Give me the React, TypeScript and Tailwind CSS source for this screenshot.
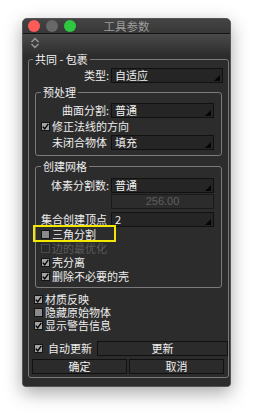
import React from "react";

function Check({ on, dim }: { on?: boolean; dim?: boolean }) {
  if (dim) {
    return <span className="block h-[9px] w-[9px] shrink-0 border border-[#4a4a4a] bg-[#2a2a2a]" />;
  }
  return (
    <span
      className={
        "flex h-[9px] w-[9px] shrink-0 items-center justify-center border border-[#141414] " +
        (on ? "bg-[#a3a3a3]" : "bg-[#8a8a8a]")
      }
    >
      {on && (
        <svg width="7" height="7" viewBox="0 0 7 7">
          <path d="M0.8 3.6 L2.7 5.8 L6.3 0.8" fill="none" stroke="#000" strokeWidth="1.4" />
        </svg>
      )}
    </span>
  );
}

function Select({ value, w }: { value: string; w: string }) {
  return (
    <div
      className={
        "flex h-[15px] items-center justify-between border border-[#111] bg-[#252525] pl-[3px] pr-[2px] " + w
      }
    >
      <span className="leading-[13px] text-[#f0f0f0]">{value}</span>
      <svg className="mb-[1px] self-end" width="6" height="6" viewBox="0 0 6 6">
        <polygon points="6,0 6,6 0,6" fill="#050505" />
      </svg>
    </div>
  );
}

function Row({ label, labelW, pr = 2, children }: { label: string; labelW: string; pr?: number; children: React.ReactNode }) {
  return (
    <div className="flex items-center">
      <span
        className={
          "shrink-0 text-right leading-[15px] text-[#ececec] " + labelW + (pr === 2 ? " pr-[2px]" : " pr-[4px]")
        }
      >
        {label}
      </span>
      {children}
    </div>
  );
}

function CheckRow({ label, on, dim, h, pl }: { label: string; on?: boolean; dim?: boolean; h: string; pl: string }) {
  return (
    <div className={"flex items-center gap-[2px] " + h + " " + pl}>
      <Check on={on} dim={dim} />
      <span className={"leading-[13px] " + (dim ? "text-[#5c5c5c]" : "text-[#ededed]")}>{label}</span>
    </div>
  );
}

export default function App() {
  return (
    <div className="min-h-[416px] bg-white pl-[22px] pt-[18px] font-['Noto_Sans_CJK_SC','Noto_Sans',sans-serif] text-[11px]">
      <div className="w-[209px] overflow-hidden rounded-t-[5px] rounded-b-[4px] border border-[#555] bg-[#2c2c2c] shadow-[0_6px_18px_rgba(0,0,0,0.35)]">
        {/* title bar */}
        <div className="relative flex h-[15px] items-center border-b border-[#121212] bg-gradient-to-b from-[#444] to-[#383838]">
          <div className="flex items-center gap-[6px] pl-[5px]">
            <span className="h-[12px] w-[12px] rounded-full bg-[#fc5b57]" />
            <span className="h-[12px] w-[12px] rounded-full bg-[#686868]" />
            <span className="h-[12px] w-[12px] rounded-full bg-[#2dc840]" />
          </div>
          <span className="absolute left-0 right-0 top-0 text-center text-[11.5px] leading-[15px] text-[#9d9d9d]">
            工具参数
          </span>
        </div>

        <div className="bg-[linear-gradient(to_bottom,#4a4a4a_0px,#2c2c2c_22px)] px-[5px] pb-[8px]">
          <div className="flex h-[18px] items-center pl-[2px]">
            <svg width="10" height="12" viewBox="0 0 10 12">
              <path d="M1.5 5 L5 1.5 L8.5 5" fill="none" stroke="#9a9a9a" strokeWidth="1.4" />
              <path d="M1.5 7 L5 10.5 L8.5 7" fill="none" stroke="#9a9a9a" strokeWidth="1.4" />
            </svg>
          </div>

          <fieldset className="mr-[3px] rounded-[3px] border border-[#7a7a7a] pb-[4px]">
            <legend className="ml-[4px] px-[2px] leading-[14px] text-[#f4f4f4]">共同 - 包裹</legend>

            <div className="mt-[2px]">
              <Row label="类型:" labelW="w-[82px]">
                <Select value="自适应" w="w-[112px]" />
              </Row>
            </div>

            <fieldset className="ml-[6px] mr-[6px] mt-[2px] rounded-[3px] border border-[#7a7a7a] pb-[5px]">
              <legend className="ml-[5px] px-[2px] leading-[14px] text-[#ececec]">预处理</legend>
              <div className="mt-[4px]">
                <Row label="曲面分割:" labelW="w-[75px]">
                  <Select value="普通" w="w-[103px]" />
                </Row>
              </div>
              <CheckRow label="修正法线的方向" on h="h-[16px]" pl="pl-[5px]" />
              <div className="mt-[1px]">
                <Row label="未闭合物体" labelW="w-[75px]" pr={4}>
                  <Select value="填充" w="w-[103px]" />
                </Row>
              </div>
            </fieldset>

            <fieldset className="ml-[6px] mr-[6px] mt-[3px] rounded-[3px] border border-[#7a7a7a] pb-[4px]">
              <legend className="ml-[5px] px-[2px] leading-[14px] text-[#ececec]">创建网格</legend>
              <div className="mt-[5px]">
                <Row label="体素分割数:" labelW="w-[75px]">
                  <Select value="普通" w="w-[103px]" />
                </Row>
              </div>
              <div className="ml-[75px] mt-[1px] flex h-[15px] w-[103px] items-center justify-center border border-[#1a1a1a] text-[#5f5f5f]">
                <span className="font-['Liberation_Sans',sans-serif] leading-[13px]">256.00</span>
              </div>
              <div className="mt-[3px]">
                <Row label="集合创建顶点" labelW="w-[75px]" pr={4}>
                  <Select value="2" w="w-[103px]" />
                </Row>
              </div>
              <div className="relative">
                <CheckRow label="三角分割" h="h-[14px]" pl="pl-[5px]" />
                <span className="absolute left-[-3px] top-[-2px] h-[17px] w-[83px] border-2 border-[#f5e800]" />
              </div>
              <CheckRow label="边的最优化" dim h="h-[14px]" pl="pl-[5px]" />
              <CheckRow label="壳分离" on h="h-[14px]" pl="pl-[5px]" />
              <CheckRow label="删除不必要的壳" on h="h-[14px]" pl="pl-[5px]" />
            </fieldset>

            <div className="mt-[5px]">
              <CheckRow label="材质反映" on h="h-[13px]" pl="pl-[5px]" />
              <CheckRow label="隐藏原始物体" h="h-[13px]" pl="pl-[5px]" />
              <CheckRow label="显示警告信息" on h="h-[13px]" pl="pl-[5px]" />
            </div>

            <div className="mt-[9px] flex h-[14px] items-center pl-[5px]">
              <Check on />
              <span className="ml-[5px] w-[49px] leading-[13px] text-[#ededed]">自动更新</span>
              <button className="flex h-[15px] w-[131px] items-center justify-center border border-[#111] bg-[#2b2b2b] leading-[13px] text-[#f0f0f0]">
                更新
              </button>
            </div>
            <div className="mt-[4px] flex h-[14px] gap-[2px] pl-[3px]">
              <button className="flex h-[15px] w-[95px] items-center justify-center border border-[#111] bg-[#2b2b2b] leading-[13px] text-[#f0f0f0]">
                确定
              </button>
              <button className="flex h-[15px] w-[95px] items-center justify-center border border-[#111] bg-[#2b2b2b] leading-[13px] text-[#f0f0f0]">
                取消
              </button>
            </div>
          </fieldset>
        </div>
      </div>
    </div>
  );
}
